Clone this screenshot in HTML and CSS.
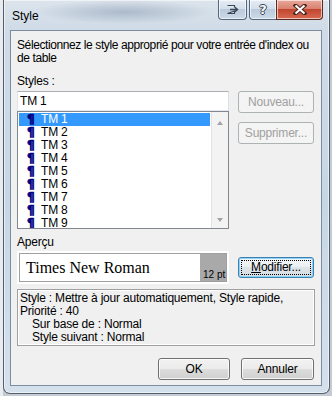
FILE: index.html
```html
<!DOCTYPE html>
<html lang="fr">
<head>
  <meta charset="UTF-8" />
  <title>Style</title>
  <link rel="stylesheet" href="styles.css">
</head>
<body>

  <div class="window">

    <!-- Title bar -->
    <div class="titlebar">
      <span class="title">Style</span>
      <div class="caption-btn extra">
        <svg width="13" height="11" viewBox="0 0 13 11">
          <path d="M1.5 1.5h7v2M8.5 7v2.5h-7z" fill="#e8edf3" stroke="#3b4656" stroke-width="1.2"/>
          <path d="M4 5.5h6.5M9 3.3l2.5 2.2-2.5 2.2" fill="none" stroke="#3b4656" stroke-width="1.4"/>
        </svg>
      </div>
      <div class="caption-group">
        <div class="caption-btn help"><span>?</span></div>
        <div class="caption-btn close">
          <svg width="14" height="11" viewBox="0 0 14 11">
            <path d="M2.5 1.5l9 8M11.5 1.5l-9 8" stroke="#4a2722" stroke-width="4" stroke-linecap="square"/>
            <path d="M2.5 1.5l9 8M11.5 1.5l-9 8" stroke="#fff" stroke-width="2"/>
          </svg>
        </div>
      </div>
    </div>

    <!-- Client area -->
    <div class="client">
      <p class="intro">Sélectionnez le style approprié pour votre entrée d'index ou de table</p>

      <div class="label styles-label">Styles :</div>

      <div class="row">
        <div class="left-column">
          <div class="textbox">TM 1</div>
          <div class="listbox">
            <ul class="items">
              <li class="selected"><span class="pil">¶</span>TM 1</li>
              <li><span class="pil">¶</span>TM 2</li>
              <li><span class="pil">¶</span>TM 3</li>
              <li><span class="pil">¶</span>TM 4</li>
              <li><span class="pil">¶</span>TM 5</li>
              <li><span class="pil">¶</span>TM 6</li>
              <li><span class="pil">¶</span>TM 7</li>
              <li><span class="pil">¶</span>TM 8</li>
              <li><span class="pil">¶</span>TM 9</li>
            </ul>
            <div class="scrollbar">
              <span class="arrow up"></span>
              <span class="arrow down"></span>
            </div>
          </div>
        </div>
        <div class="right-column">
          <button class="btn disabled">Nouveau...</button>
          <button class="btn disabled">Supprimer...</button>
        </div>
      </div>

      <div class="label apercu-label">Aperçu</div>

      <div class="row preview-row">
        <div class="preview">
          <div class="preview-inner">
            <span class="sample">Times New Roman</span>
            <span class="size">12 pt</span>
          </div>
        </div>
        <button class="btn default"><span class="focus"><u>M</u>odifier...</span></button>
      </div>

      <div class="description">
        <div>Style : Mettre à jour automatiquement, Style rapide,</div>
        <div>Priorité : 40</div>
        <div class="indent">Sur base de : Normal</div>
        <div class="indent">Style suivant : Normal</div>
      </div>

      <div class="actions">
        <button class="btn ok">OK</button>
        <button class="btn cancel">Annuler</button>
      </div>
    </div>

  </div>

</body>
</html>
```

FILE: styles.css
```css
html, body {
  margin: 0;
  padding: 0;
}
body {
  width: 332px;
  height: 396px;
  overflow: hidden;
  background: linear-gradient(to right, #e9ecef 0, #e9ecef 3px, #c4cbd3 3px);
  font-family: "Liberation Sans", Arial, sans-serif;
  font-size: 12px;
  letter-spacing: -0.2px;
  color: #000;
}
.window {
  margin-left: 3px;
  width: 325px;
  height: 393px;
  border: 1px solid rgba(40, 50, 65, 0.75);
  border-top: none;
  border-radius: 0 0 7px 7px;
  background:
    radial-gradient(ellipse 90px 12px at 120px 12px, rgba(120, 140, 165, 0.45), rgba(120, 140, 165, 0)),
    linear-gradient(to bottom, #dce4ec 0, #cfdbe7 30px, #c7d6e6 200px, #d4e0ec 100%);
  box-shadow: inset 0 0 0 1px rgba(255, 255, 255, 0.55);
}
.titlebar {
  height: 30px;
  display: flex;
  align-items: flex-start;
  padding: 0 6px 0 8px;
}
.title {
  margin-top: 9px;
  line-height: 14px;
  letter-spacing: 0;
  color: #000;
}
.caption-btn {
  height: 19px;
  display: flex;
  align-items: center;
  justify-content: center;
  border: 1px solid #56687d;
  border-top: none;
  background: linear-gradient(to bottom, #e6edf4 0, #d3dfeb 45%, #bccbdb 50%, #cbd9e8 100%);
  box-shadow: inset 0 0 0 1px rgba(255, 255, 255, 0.6);
}
.extra {
  width: 27px;
  margin-left: auto;
  border-radius: 0 0 4px 4px;
}
.caption-group {
  display: flex;
  margin-left: 2px;
}
.help {
  width: 26px;
  border-radius: 0 0 0 4px;
  border-right: none;
}
.help span {
  font-family: "DejaVu Sans", sans-serif;
  font-weight: bold;
  font-size: 13px;
  color: #f4f6f9;
  text-shadow: 1px 0 0 #3b4656, -1px 0 0 #3b4656, 0 1px 0 #3b4656, 0 -1px 0 #3b4656;
}
.close {
  width: 45px;
  border-radius: 0 0 4px 0;
  border-color: #5a2a22;
  background: linear-gradient(to bottom, #e9a99b 0, #d9826f 45%, #c24630 50%, #d86a52 100%);
}

/* client */
.client {
  width: 298px;
  height: 354px;
  margin-left: 6px;
  border: 1px solid #7d8da1;
  background: #f0f0f0;
  padding: 0 6px 0 6px;
}
.intro {
  margin: 8px 0 0 0;
  line-height: 13px;
  width: 300px;
  letter-spacing: -0.4px;
}
.label {
  line-height: 13px;
}
.styles-label {
  margin-top: 10px;
}
.row {
  display: flex;
  gap: 9px;
  margin-top: 3px;
}
.left-column {
  width: 212px;
}
.textbox {
  height: 18px;
  border: 1px solid #abadb3;
  border-color: #abadb3 #dbdfe6 #e3e9ef #e2e3ea;
  background: #fff;
  padding-left: 2px;
  line-height: 18px;
}
.listbox {
  height: 116px;
  border: 1px solid #828790;
  background: #fff;
  display: flex;
  overflow: hidden;
}
.items {
  list-style: none;
  margin: 0;
  padding: 1px 0 0 1px;
  flex: 1;
}
.items li {
  height: 13px;
  line-height: 13px;
  padding-left: 8px;
  margin-right: 1px;
  white-space: nowrap;
}
.items li.selected {
  background: #3399ff;
  color: #fff;
}
.pil {
  display: inline-block;
  width: 14px;
  color: #000080;
  font-family: "DejaVu Sans", sans-serif;
  font-weight: bold;
  font-size: 12px;
  line-height: 13px;
  -webkit-text-stroke: 0.7px #000080;
}
.scrollbar {
  width: 16px;
  border-left: 1px solid #e3e3e3;
  background: #f3f3f3;
  position: relative;
}
.arrow {
  position: absolute;
  left: 5px;
  width: 0;
  height: 0;
  border-left: 3.5px solid transparent;
  border-right: 3.5px solid transparent;
}
.arrow.up {
  top: 9px;
  border-bottom: 4px solid #a3a3a3;
}
.arrow.down {
  bottom: 6px;
  border-top: 4px solid #a3a3a3;
}
.right-column {
  display: flex;
  flex-direction: column;
  gap: 9px;
}
.btn {
  font-family: "Liberation Sans", Arial, sans-serif;
  font-size: 12px;
  letter-spacing: -0.2px;
  width: 76px;
  height: 22px;
  padding: 0;
  border: 1px solid #707070;
  border-radius: 3px;
  color: #000;
  background: linear-gradient(to bottom, #f2f2f2 0, #ebebeb 50%, #dddddd 50%, #cfcfcf 100%);
  box-shadow: inset 0 0 0 1px rgba(255, 255, 255, 0.8);
}
.btn.disabled {
  border-color: #adb2b5;
  background: #f4f4f4;
  color: #a0a0a0;
  box-shadow: none;
}
.apercu-label {
  margin-top: 7px;
}
.preview-row {
  margin-top: 2px;
  align-items: center;
}
.preview {
  width: 208px;
  height: 29px;
  border: 2px solid #fff;
  background: #fff;
}
.preview-inner {
  height: 27px;
  border: 1px solid #a0a0a0;
  display: flex;
  background: linear-gradient(to right, #fff 0, #fff 180px, #a9a9a9 180px);
}
.sample {
  font-family: "Liberation Serif", "Times New Roman", serif;
  font-size: 16px;
  letter-spacing: 0;
  line-height: 27px;
  padding-left: 6px;
  width: 174px;
}
.size {
  font-size: 10px;
  letter-spacing: 0;
  align-self: flex-end;
  margin-left: 3px;
  line-height: 12px;
}
.btn.default {
  height: 21px;
  border-color: #3c7fb1;
  box-shadow: inset 0 0 0 1px #8ed4f6;
  background: linear-gradient(to bottom, #f3f6f8 0, #eaeff2 50%, #dde4e8 50%, #d5dde2 100%);
  display: flex;
  align-items: center;
  justify-content: center;
  padding: 2px;
}
.focus {
  display: block;
  width: 100%;
  height: 15px;
  line-height: 13px;
  border: 1px dotted #000;
  box-sizing: border-box;
}
.description {
  margin-top: 5px;
  width: 292px;
  height: 51px;
  border: 1px solid #a0a0a0;
  box-shadow: inset 0 0 0 1px #fff;
  padding: 2px 2px 2px 2px;
  line-height: 13px;
}
.indent {
  padding-left: 12px;
}
.actions {
  display: flex;
  justify-content: flex-end;
  gap: 11px;
  margin-top: 12px;
  width: 297px;
}
.btn.ok {
  width: 72px;
}
.btn.cancel {
  width: 73px;
}
```
